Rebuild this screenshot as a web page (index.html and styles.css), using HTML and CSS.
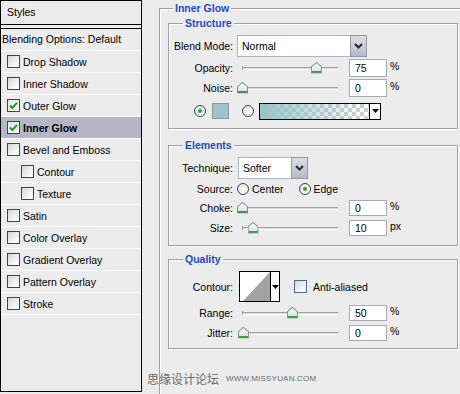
FILE: index.html
```html
<!DOCTYPE html>
<html>
<head>
<meta charset="utf-8">
<link rel="stylesheet" href="styles.css">
</head>
<body>
<div class="app">
  <aside class="styles">
    <div class="styles-head">Styles</div>
    <div class="blend-opt">Blending Options: Default</div>
    <ul class="fx">
      <li><span class="cb"></span>Drop Shadow</li>
      <li><span class="cb"></span>Inner Shadow</li>
      <li><span class="cb on"><svg viewBox="0 0 11 11" width="11" height="11"><path d="M2 5.5 L4.4 8 L9 2.8" fill="none" stroke="#1f9a1f" stroke-width="2"/></svg></span>Outer Glow</li>
      <li class="sel"><span class="cb on"><svg viewBox="0 0 11 11" width="11" height="11"><path d="M2 5.5 L4.4 8 L9 2.8" fill="none" stroke="#1f9a1f" stroke-width="2"/></svg></span>Inner Glow</li>
      <li><span class="cb"></span>Bevel and Emboss</li>
      <li class="sub"><span class="cb"></span>Contour</li>
      <li class="sub"><span class="cb"></span>Texture</li>
      <li><span class="cb"></span>Satin</li>
      <li><span class="cb"></span>Color Overlay</li>
      <li><span class="cb"></span>Gradient Overlay</li>
      <li><span class="cb"></span>Pattern Overlay</li>
      <li><span class="cb"></span>Stroke</li>
    </ul>
  </aside>

  <main class="main">
    <div class="outer">
      <div class="legend legend-outer">Inner Glow</div>

      <section class="box box-structure">
        <div class="legend">Structure</div>
        <div class="row row-select">
          <span class="lbl">Blend Mode:</span>
          <div class="select select-blend">
            <span class="val">Normal</span>
            <span class="btn"><svg viewBox="0 0 11 8" width="11" height="8"><path d="M2 2 L5.5 5.5 L9 2" fill="none" stroke="#2a2a2a" stroke-width="2"/></svg></span>
          </div>
        </div>
        <div class="row row-first">
          <span class="lbl">Opacity:</span>
          <div class="slider"><span class="thumb" style="left:77%"></span></div>
          <span class="num num-tall">75</span><span class="unit">%</span>
        </div>
        <div class="row">
          <span class="lbl">Noise:</span>
          <div class="slider"><span class="thumb" style="left:0%"></span></div>
          <span class="num num-tall">0</span><span class="unit">%</span>
        </div>
        <div class="row colors">
          <span class="radio on"></span>
          <span class="swatch"></span>
          <span class="radio radio-gap"></span>
          <div class="gradient">
            <span class="grad-fill"></span>
            <span class="grad-btn"><svg viewBox="0 0 7 4" width="7" height="4"><path d="M0 0 H7 L3.5 4 Z" fill="#000"/></svg></span>
          </div>
        </div>
      </section>

      <section class="box box-elements">
        <div class="legend">Elements</div>
        <div class="row row-select">
          <span class="lbl">Technique:</span>
          <div class="select select-tech">
            <span class="val">Softer</span>
            <span class="btn"><svg viewBox="0 0 11 8" width="11" height="8"><path d="M2 2 L5.5 5.5 L9 2" fill="none" stroke="#2a2a2a" stroke-width="2"/></svg></span>
          </div>
        </div>
        <div class="row row-source">
          <span class="lbl">Source:</span>
          <span class="radio radio-ctl"></span><span class="opt">Center</span>
          <span class="radio on radio-edge"></span><span class="opt">Edge</span>
        </div>
        <div class="row">
          <span class="lbl">Choke:</span>
          <div class="slider"><span class="thumb" style="left:0%"></span></div>
          <span class="num">0</span><span class="unit">%</span>
        </div>
        <div class="row">
          <span class="lbl">Size:</span>
          <div class="slider"><span class="thumb" style="left:11%"></span></div>
          <span class="num">10</span><span class="unit">px</span>
        </div>
      </section>

      <section class="box box-quality">
        <div class="legend">Quality</div>
        <div class="row row-contour">
          <span class="lbl">Contour:</span>
          <div class="contour">
            <svg class="contour-curve" viewBox="0 0 30 29" width="30" height="29"><rect width="30" height="29" fill="#fff"/><path d="M3 29 L30 0 V29 Z" fill="#a3a3a3"/></svg>
            <span class="contour-btn"><svg viewBox="0 0 7 4" width="7" height="4"><path d="M0 0 H7 L3.5 4 Z" fill="#000"/></svg></span>
          </div>
          <span class="cb cb-aa"></span><span class="opt">Anti-aliased</span>
        </div>
        <div class="row row-first">
          <span class="lbl">Range:</span>
          <div class="slider"><span class="thumb" style="left:52%"></span></div>
          <span class="num">50</span><span class="unit">%</span>
        </div>
        <div class="row">
          <span class="lbl">Jitter:</span>
          <div class="slider"><span class="thumb" style="left:1%"></span></div>
          <span class="num">0</span><span class="unit">%</span>
        </div>
      </section>
    </div>
  </main>
</div>
<div class="watermark">思缘设计论坛<span class="www">WWW.MISSYUAN.COM</span></div>
</body>
</html>
```
FILE: styles.css
```css
* { box-sizing: border-box; }
html, body { margin: 0; padding: 0; }
body {
  width: 460px;
  height: 394px;
  overflow: hidden;
  position: relative;
  background: #ececec;
  font-family: "Liberation Sans", Arial, sans-serif;
  font-size: 10.5px;
  color: #000;
}
.app { display: flex; align-items: flex-start; }

/* ---------- left styles list ---------- */
.styles {
  flex: none;
  width: 142px;
  height: 392px;
  border: 1px solid #000;
  background: #ececec;
}
.styles-head {
  height: 24px;
  line-height: 23px;
  padding-left: 6px;
  border-bottom: 1px solid #000;
}
.blend-opt {
  margin-top: 3px;
  height: 23px;
  line-height: 21px;
  padding-left: 1px;
  border-top: 1px solid #000;
  border-bottom: 1px solid #fafafa;
}
.fx { list-style: none; margin: 0; padding: 0; }
.fx li {
  display: flex;
  align-items: center;
  height: 22px;
  padding-left: 6px;
  border-bottom: 1px solid #fafafa;
}
.fx li.sub { padding-left: 20px; }
.fx li.sel { background: #b6b7c6; font-weight: bold; }
.cb {
  flex: none;
  width: 13px;
  height: 13px;
  margin-right: 3px;
  border: 1px solid #2b4a66;
  background: linear-gradient(135deg, #d4d6d8, #f6f6f6 70%, #fff);
  display: flex;
  align-items: center;
  justify-content: center;
}
.cb.on { background: linear-gradient(135deg, #e2e3e4, #fff); }

/* ---------- right panel ---------- */
.main {
  flex: none;
  margin-left: 17px;
  margin-top: 8px;
  width: 320px;
}
.outer {
  height: 400px;
  border-top: 1px solid #a0a0a0;
  border-left: 1px solid #a0a0a0;
  box-shadow: inset 1px 1px 0 #fff;
}
.legend {
  width: max-content;
  height: 13px;
  margin-top: -7px;
  margin-left: 14px;
  padding: 0 2px;
  line-height: 13px;
  background: #ececec;
  color: #1f4cc0;
  font-weight: bold;
  font-size: 10.5px;
}
.legend-outer { margin-left: 13px; }
.box {
  width: 290px;
  margin-left: 8px;
  border: 1px solid #a0a0a0;
  box-shadow: inset 1px 1px 0 #fff, 1px 1px 0 #fff;
}
.box-structure { margin-top: 8px; padding-bottom: 7px; }
.box-elements { margin-top: 16px; padding-bottom: 7px; }
.box-quality { margin-top: 13px; padding-bottom: 5px; }

.row {
  display: flex;
  align-items: center;
  height: 20px;
}
.row-first { margin-top: 1px; }
.row-select { height: 22px; margin-top: 5px; }
.row-source { height: 19px; }
.row-contour { height: 31px; margin-top: 5px; }
.lbl {
  flex: none;
  width: 64px;
  text-align: right;
  white-space: nowrap;
}

.select {
  flex: none;
  display: flex;
  height: 22px;
  margin-left: 4px;
  border: 1px solid #a9b6c8;
  background: #fff;
}
.select-blend { width: 130px; }
.select-tech { width: 70px; margin-left: 5px; }
.select .val { flex: 1; padding-left: 4px; line-height: 20px; }
.select .btn {
  flex: none;
  width: 17px;
  display: flex;
  align-items: center;
  justify-content: center;
  background: linear-gradient(#dcdde4, #b8bac7);
  border: 1px solid #8f97a8;
  margin: -1px -1px -1px 0;
}

.slider {
  flex: none;
  position: relative;
  width: 96px;
  height: 3px;
  margin-left: 9px;
  border-top: 1px solid #a2a2a2;
  border-bottom: 1px solid #fff;
  background: #d9d9d9;
}
.slider::before {
  content: "";
  position: absolute;
  left: 0;
  top: -2px;
  width: 1px;
  height: 4px;
  background: #a2a2a2;
}
.thumb {
  position: absolute;
  top: -6px;
  width: 11px;
  height: 12px;
  margin-left: -5px;
  background:
    linear-gradient(#2ea52e, #2ea52e) 1px 9px / 9px 2px no-repeat,
    linear-gradient(#fdfdfd, #d7dcdc);
  clip-path: polygon(50% 0, 100% 40%, 100% 100%, 0 100%, 0 40%);
}
.thumb::after {
  content: "";
  position: absolute;
  inset: 0;
  background: #7d8b8b;
  clip-path: polygon(50% 0, 100% 40%, 100% 100%, 0 100%, 0 40%, 1px 40%, 1px calc(100% - 1px), calc(100% - 1px) calc(100% - 1px), calc(100% - 1px) 44%, 50% 1.5px, 1px 44%, 0 40%);
}

.num {
  flex: none;
  width: 38px;
  height: 16px;
  margin-left: 11px;
  padding-left: 5px;
  line-height: 14px;
  background: #fff;
  border: 1px solid #a6abb3;
}
.num-tall { height: 18px; line-height: 16px; }
.unit { margin-left: 3px; margin-bottom: 5px; }

.radio {
  flex: none;
  width: 12px;
  height: 12px;
  border-radius: 50%;
  border: 1px solid #2b4a66;
  background: radial-gradient(circle at 65% 65%, #fff, #dcdcdc);
  display: flex;
  align-items: center;
  justify-content: center;
}
.radio.on::after {
  content: "";
  width: 4px;
  height: 4px;
  border-radius: 50%;
  background: #25a525;
}
.colors { padding-left: 25px; margin-top: 3px; }
.swatch {
  flex: none;
  width: 17px;
  height: 16px;
  margin-left: 6px;
  background: #9cc5cb;
  border: 1px solid #8a9a9c;
}
.radio-gap { margin-left: 13px; }
.gradient {
  flex: none;
  display: flex;
  width: 122px;
  height: 17px;
  margin-left: 5px;
  border: 1px solid #000;
}
.grad-fill {
  flex: 1;
  background:
    linear-gradient(to right, #97c3c9, rgba(151, 195, 201, 0)),
    conic-gradient(#cfcfcf 25%, #fff 0 50%, #cfcfcf 0 75%, #fff 0) 0 0 / 8px 8px;
}
.grad-btn {
  flex: none;
  width: 11px;
  border-left: 1px solid #000;
  background: #fff;
  display: flex;
  align-items: center;
  justify-content: center;
}

.radio-ctl { margin-left: 4px; }
.opt { margin-left: 3px; }
.radio-edge { margin-left: 15px; }

.contour {
  flex: none;
  display: flex;
  width: 41px;
  height: 31px;
  margin-left: 6px;
  border: 1px solid #000;
  background: #fff;
}
.contour-curve { display: block; flex: none; }
.contour-btn {
  flex: 1;
  border-left: 1px solid #000;
  display: flex;
  align-items: center;
  justify-content: center;
}
.cb-aa { margin-left: 14px; border-color: #4a6a86; background: linear-gradient(135deg, #d7dde4, #fff); }

/* ---------- watermark ---------- */
.watermark {
  position: absolute;
  left: 147px;
  top: 371px;
  display: flex;
  align-items: center;
  height: 14px;
  font-family: "Noto Sans CJK SC", sans-serif;
  font-size: 12px;
  color: #6b6b6b;
  white-space: nowrap;
}
.www {
  margin-left: 7px;
  font-family: "Liberation Sans", Arial, sans-serif;
  font-size: 8px;
  letter-spacing: 0.2px;
  color: #6b6b6b;
}
```
